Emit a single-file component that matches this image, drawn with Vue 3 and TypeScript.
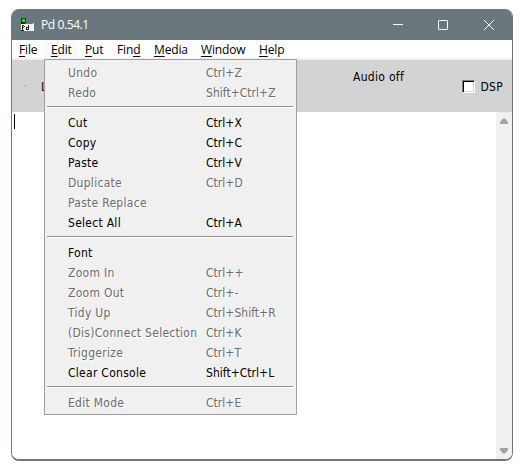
<script setup lang="ts">
interface Entry { label: string; keys?: string; off?: boolean }
const menus = [
  { pre: '', key: 'F', post: 'ile', cls: 'file' },
  { pre: '', key: 'E', post: 'dit', cls: 'edit' },
  { pre: '', key: 'P', post: 'ut', cls: 'put' },
  { pre: 'Fin', key: 'd', post: '', cls: 'find' },
  { pre: '', key: 'M', post: 'edia', cls: 'media' },
  { pre: '', key: 'W', post: 'indow', cls: 'window-menu' },
  { pre: '', key: 'H', post: 'elp', cls: 'help' },
]
const groups: Entry[][] = [
  [
    { label: 'Undo', keys: 'Ctrl+Z', off: true },
    { label: 'Redo', keys: 'Shift+Ctrl+Z', off: true },
  ],
  [
    { label: 'Cut', keys: 'Ctrl+X' },
    { label: 'Copy', keys: 'Ctrl+C' },
    { label: 'Paste', keys: 'Ctrl+V' },
    { label: 'Duplicate', keys: 'Ctrl+D', off: true },
    { label: 'Paste Replace', off: true },
    { label: 'Select All', keys: 'Ctrl+A' },
  ],
  [
    { label: 'Font' },
    { label: 'Zoom In', keys: 'Ctrl++', off: true },
    { label: 'Zoom Out', keys: 'Ctrl+-', off: true },
    { label: 'Tidy Up', keys: 'Ctrl+Shift+R', off: true },
    { label: '(Dis)Connect Selection', keys: 'Ctrl+K', off: true },
    { label: 'Triggerize', keys: 'Ctrl+T', off: true },
    { label: 'Clear Console', keys: 'Shift+Ctrl+L' },
  ],
  [{ label: 'Edit Mode', keys: 'Ctrl+E', off: true }],
]
</script>

<template>
  <main class="desktop">
    <section class="window">
      <header class="titlebar">
        <svg class="logo" width="14" height="14" viewBox="0 0 14 14" shape-rendering="crispEdges">
          <rect width="5" height="5" fill="#063b0a" />
          <rect x="1" y="1" width="3" height="3" fill="#00ef18" />
          <rect y="5" width="4" height="1" fill="#202020" />
          <rect y="6" width="13" height="7" fill="#f4f4f4" />
          <rect x="12" y="5" width="1" height="1" fill="#f4f4f4" />
          <rect y="12" width="3" height="1" fill="#202020" />
          <path d="M1 7h2v1h1v1H3v1H2v2H1zM7 7h1v5H5V9h2z" fill="#222" />
          <path d="M2 8h1v1H2zM6 10h1v1H6z" fill="#eee" />
        </svg>
        <span class="title">Pd 0.54.1</span>
        <svg class="controls" width="104" height="12" viewBox="0 0 104 12" fill="none" stroke="#fff">
          <path d="M0 5.5h10" />
          <rect x="45.5" y="1.5" width="9" height="9" rx=".6" />
          <path d="M91 1l10 10M101 1L91 11" />
        </svg>
      </header>
      <nav class="menubar">
        <span v-for="m in menus" :key="m.key" class="menu-name" :class="m.cls">{{ m.pre }}<span class="access">{{ m.key }}</span>{{ m.post }}</span>
      </nav>
      <div class="toolbar">
        <span class="dot"></span>
        <span class="log">Log:</span>
        <span class="audio">Audio off</span>
        <label class="dsp"><span class="check"></span><span class="dsp-text">DSP</span></label>
      </div>
      <div class="console">
        <div class="page"><span class="caret"></span></div>
        <div class="scrollbar">
          <svg width="8" height="6" viewBox="0 0 8 6"><path d="M3 .5h2L8 4v2H0V4z" fill="#a3a3a3" /></svg>
          <svg width="8" height="6" viewBox="0 0 8 6"><path d="M0 0h8v2L5 5.5H3L0 2z" fill="#a3a3a3" /></svg>
        </div>
      </div>
    </section>
    <div class="popup">
      <ul v-for="(g, i) in groups" :key="i" class="group">
        <li v-for="e in g" :key="e.label" class="entry" :class="{ off: e.off }">
          <span class="label">{{ e.label }}</span><span class="keys">{{ e.keys }}</span>
        </li>
      </ul>
    </div>
  </main>
</template>

<style>
body { background: #fff; overflow: hidden; }
</style>
<style scoped>
.desktop {
  position: relative;
  box-sizing: border-box;
  width: 522px;
  height: 466px;
  padding: 9px 9px 5px 11px;
  background: #fff;
  color: #000;
  font: 12px/20px "DejaVu Sans Condensed", "DejaVu Sans", sans-serif;
  font-stretch: condensed;
  white-space: nowrap;
}
.window {
  display: flex;
  flex-direction: column;
  box-sizing: border-box;
  width: 502px;
  height: 452px;
  border: 1px solid #6a787d;
  border-top: 0;
  border-bottom-width: 2px;
  border-radius: 8px;
  overflow: hidden;
}
.titlebar {
  display: flex;
  align-items: center;
  flex: none;
  height: 31px;
  background: #6a787d;
  color: #fff;
  font: 12px/20px "Open Sans", sans-serif;
}
.logo { margin: 0 6px 0 9px; }
.title { letter-spacing: -.4px; }
.controls { margin: 0 15px 0 auto; }
.menubar {
  display: flex;
  flex: none;
  height: 18px;
  border-bottom: 2px solid #f0f0f0;
  background: #fff;
  font: 12px/20px "Open Sans", sans-serif;
  letter-spacing: -.15px;
}
.menu-name { box-sizing: border-box; height: 18px; padding-left: 7px; flex: none; }
.access { text-decoration: underline; text-underline-offset: 2px; text-decoration-thickness: 1px; text-decoration-skip-ink: none; }
.file { width: 32px; }
.edit { width: 34px; background: #fafafa; }
.put { width: 32px; }
.find { width: 37px; }
.media { width: 47px; }
.window-menu { width: 58px; }
.toolbar {
  display: flex;
  flex: none;
  height: 52px;
  background: #d3d3d3;
}
.dot { width: 1px; height: 1px; margin: 25px 15px 0 13px; background: #888; }
.log { width: 312px; padding-top: 17px; }
.audio { padding-top: 7px; letter-spacing: .3px; }
.dsp { display: flex; align-items: flex-start; margin: 17px 9px 0 auto; }
.dsp-text { letter-spacing: .3px; }
.check {
  box-sizing: border-box;
  width: 13px;
  height: 13px;
  margin: 3px 5px 0 0;
  border: 1px solid;
  border-color: #808080 #fff #fff #808080;
  background: #fff;
  box-shadow: inset 1px 1px #000, inset -1px -1px #d9d9d9;
}
.console { display: flex; flex: 1; background: #fff; }
.page { flex: 1; padding: 2px; }
.caret { display: block; width: 1px; height: 15px; background: #000; }
.scrollbar {
  display: flex;
  flex-direction: column;
  justify-content: space-between;
  align-items: center;
  box-sizing: border-box;
  width: 16px;
  padding: 6px 0 5px;
  background: #f0f0f0;
}
.popup {
  position: absolute;
  left: 44px;
  top: 59px;
  box-sizing: border-box;
  width: 253px;
  height: 356px;
  padding: 3px 3px 3px 2px;
  border: 1px solid #a0a0a0;
  background: #f0f0f0;
}
.group { margin: 0; padding: 0; list-style: none; }
.group + .group { margin-top: 3px; padding-top: 6px; border-top: 1px solid #919191; box-shadow: inset 0 1px #fff; }
.entry { display: flex; height: 20px; padding-left: 21px; }
.label { width: 138px; letter-spacing: .28px; }
.keys { letter-spacing: .03px; }
.off { color: #6d6d6d; text-shadow: 1px 1px #fff; }
</style>
